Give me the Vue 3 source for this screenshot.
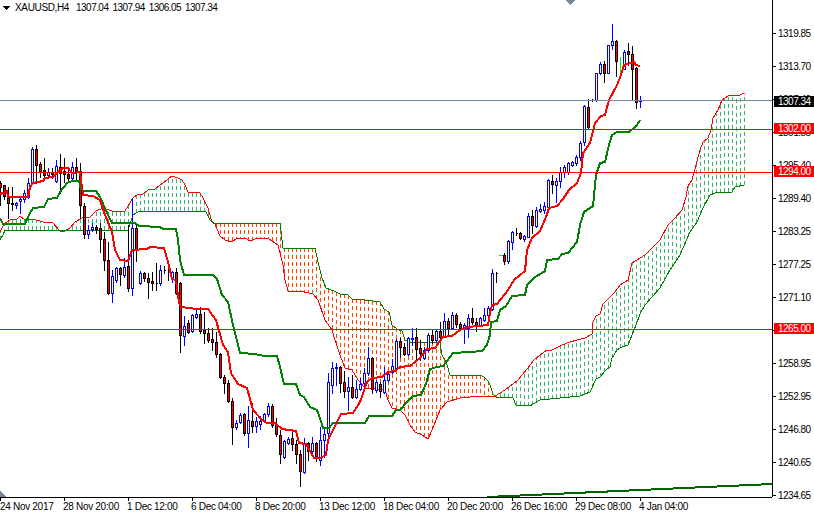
<script setup>
// candles: [high, low, bodyTop, bodyBottom, up] in chart pixels, one bar every 4px
const bars = [
  [181,205,183,187,0],[186,199,185,196,0],[187,218,198,203,0],[187,210,203,204,0],[202,208,203,205,1],[197,213,199,201,1],[190,202,193,199,1],[178,198,183,197,1],
  [147,183,149,182,1],[145,183,149,165,0],[162,177,164,172,0],[158,176,170,175,0],[168,177,172,175,1],[168,178,172,174,0],[160,182,166,181,1],[154,193,167,173,0],
  [158,182,171,174,0],[168,180,174,178,0],[162,179,167,178,1],[158,180,167,171,0],[163,218,171,205,0],[203,238,206,234,0],[225,238,230,234,1],[223,231,227,229,1],
  [225,233,227,229,0],[223,252,228,239,0],[232,270,239,260,0],[242,294,260,293,0],[270,302,276,293,1],[267,282,268,280,1],[267,285,268,274,0],[258,277,267,275,1],
  [225,291,266,288,0],[198,295,228,288,1],[225,261,228,250,0],[271,284,273,283,1],[272,281,273,278,0],[273,298,278,282,0],[272,290,281,283,0],[263,290,283,283,0],
  [265,285,270,283,1],[266,273,270,270,0],[267,280,271,271,0],[271,282,272,279,1],[268,294,272,293,0],[282,352,283,335,0],[316,345,326,336,1],[320,333,323,332,0],
  [314,332,315,331,1],[310,318,314,317,1],[307,333,314,331,0],[312,343,330,333,0],[328,342,333,340,0],[328,350,339,342,0],[332,357,342,354,0],[353,378,354,377,0],
  [375,393,377,383,0],[380,402,383,401,0],[398,444,401,427,0],[420,429,423,427,1],[413,423,415,422,1],[413,435,414,433,0],[406,447,420,433,1],[403,432,421,426,0],
  [417,432,421,426,1],[416,429,421,424,1],[413,421,414,420,1],[403,416,406,414,1],[404,427,406,425,0],[418,436,425,434,0],[430,463,435,454,0],[440,458,441,457,1],
  [437,444,439,443,1],[430,450,438,444,0],[440,463,444,454,0],[450,486,454,471,0],[438,473,444,472,1],[442,460,443,451,0],[437,452,443,451,1],[442,461,443,458,0],
  [427,465,440,460,1],[427,457,434,440,1],[373,438,382,433,1],[362,393,368,385,1],[363,385,367,368,1],[366,392,367,383,0],[371,397,382,391,0],[377,410,387,391,1],
  [375,398,387,397,0],[380,398,389,397,1],[378,390,384,389,1],[368,385,373,383,1],[347,375,358,373,1],[357,393,358,389,0],[380,392,382,390,1],[382,397,384,391,0],
  [367,393,380,392,1],[372,381,374,380,1],[359,373,366,372,1],[339,370,341,368,1],[338,357,341,347,0],[343,355,347,354,0],[337,355,338,354,1],[328,345,338,339,1],
  [328,360,337,349,0],[340,360,348,353,0],[347,359,350,358,1],[333,351,335,350,1],[330,343,335,340,0],[330,341,331,340,1],[322,341,331,337,0],[313,337,321,337,1],
  [318,334,321,328,0],[312,328,315,328,1],[313,327,315,324,0],[322,329,324,328,0],[323,343,325,328,1],[314,337,318,328,1],[308,324,318,322,0],[318,331,322,326,0],
  [317,326,318,325,1],[308,321,315,320,1],[306,316,308,315,1],[269,310,273,309,1],[272,282,273,273,0],[255,255,255,255,2],[253,264,255,261,0],[240,263,241,261,1],
  [231,249,232,242,1],[228,235,233,233,0],[232,239,233,238,0],[235,241,236,239,1],[213,237,216,237,1],[210,233,216,225,0],[207,227,210,226,1],[204,212,209,211,1],
  [202,213,206,210,1],[179,208,180,207,1],[175,193,181,184,0],[178,202,181,185,1],[167,187,172,181,1],[165,177,167,172,1],[162,174,163,172,1],[161,166,162,165,1],
  [155,165,157,163,1],[141,160,143,157,1],[105,145,106,142,1],[99,128,107,127,0],[99,101,100,100,0],[73,101,73,100,1],[62,74,64,73,1],[61,82,64,73,0],
  [45,73,45,73,1],[24,49,41,45,1],[40,76,41,61,0],[57,73,65,65,2],[50,69,52,69,1],[43,65,51,54,0],[46,100,54,69,0],[67,108,68,102,0],[96,107,100,101,1]
]

const spanA = [[0,232],[4,224],[10,220],[17,219],[20,216],[25,220],[33,219],[43,222],[52,222],[60,231],[63,232],[70,228],[75,222],[82,218],[90,217],[96,211],[103,208],[112,211],[125,211],[133,198],[137,195],[143,194],[148,190],[155,189],[163,183],[168,179],[172,176],[178,178],[182,180],[185,185],[188,192],[200,193],[203,198],[208,208],[212,222],[215,224],[220,236],[225,240],[232,242],[237,238],[245,238],[250,241],[258,238],[268,238],[272,241],[278,245],[283,265],[285,280],[288,291],[300,291],[313,294],[318,300],[325,320],[332,330],[335,340],[340,355],[345,368],[352,370],[358,380],[365,388],[385,390],[388,400],[392,408],[400,410],[405,415],[410,425],[415,432],[422,435],[428,439],[432,430],[440,410],[447,402],[460,398],[480,396],[495,396],[505,390],[518,380],[527,369],[534,360],[540,355],[547,350],[552,350],[562,345],[570,342],[577,340],[585,338],[592,334],[593,322],[596,316],[600,314],[603,304],[607,300],[615,292],[620,285],[628,280],[632,263],[640,258],[645,255],[655,245],[660,240],[668,225],[675,218],[682,210],[686,197],[688,186],[692,180],[696,165],[700,150],[703,142],[708,138],[711,130],[713,118],[718,110],[722,100],[725,98],[730,95],[740,95],[744,93]]
const spanB = [[0,240],[3,235],[5,230],[128,230],[133,215],[138,212],[148,211],[200,211],[206,212],[210,220],[215,224],[222,223],[280,223],[283,248],[315,248],[318,262],[322,278],[326,288],[334,291],[340,294],[347,294],[352,299],[365,300],[380,302],[384,309],[389,312],[392,325],[397,329],[402,331],[405,340],[409,342],[440,342],[442,355],[446,362],[448,368],[450,375],[480,375],[484,377],[488,381],[490,385],[493,394],[496,397],[513,398],[516,405],[530,406],[540,400],[560,398],[580,396],[590,392],[596,379],[600,377],[606,370],[610,367],[612,358],[617,350],[622,347],[628,345],[632,335],[636,325],[640,314],[645,305],[660,288],[670,270],[680,255],[690,232],[697,222],[703,208],[710,195],[715,193],[732,192],[735,187],[744,185]]

const tenkan = [[0,194],[3,193],[7,191],[8,197],[28,197],[30,187],[33,183],[43,181],[45,178],[53,177],[57,173],[63,168],[68,168],[72,173],[80,172],[83,195],[93,196],[100,200],[105,215],[112,232],[115,250],[120,260],[128,261],[132,250],[147,249],[150,247],[164,248],[168,262],[172,279],[176,280],[179,303],[181,307],[197,309],[208,309],[216,320],[223,345],[228,352],[231,373],[238,384],[247,388],[253,410],[262,420],[267,423],[275,423],[282,429],[296,431],[299,443],[306,444],[314,458],[320,458],[326,455],[328,440],[335,426],[341,414],[353,413],[360,402],[367,382],[372,378],[382,377],[388,372],[395,371],[400,367],[410,366],[420,358],[427,349],[435,348],[443,337],[452,336],[460,330],[468,327],[488,325],[490,313],[492,305],[497,304],[508,290],[514,280],[525,271],[527,250],[532,238],[540,231],[546,217],[549,208],[557,206],[563,199],[569,190],[577,183],[581,173],[583,153],[590,143],[595,123],[601,116],[605,115],[609,100],[617,85],[621,75],[624,65],[634,62],[636,65],[640,66]]
const kijun = [[0,218],[3,224],[25,224],[30,213],[33,208],[44,207],[48,199],[57,198],[60,192],[67,183],[72,181],[79,181],[81,190],[84,191],[96,191],[100,197],[108,215],[112,223],[135,223],[139,226],[160,227],[163,229],[176,229],[178,240],[180,260],[184,275],[213,275],[217,279],[222,295],[228,302],[233,325],[240,353],[255,354],[264,356],[277,356],[280,367],[284,384],[296,384],[300,395],[304,397],[310,407],[317,410],[320,418],[323,428],[329,428],[333,423],[365,423],[369,416],[392,416],[396,410],[400,410],[407,402],[413,396],[421,395],[426,384],[430,369],[437,367],[443,366],[447,361],[453,353],[470,352],[482,351],[487,345],[490,335],[491,322],[497,321],[500,310],[506,306],[512,296],[525,295],[527,285],[535,277],[542,273],[545,271],[547,260],[558,259],[562,254],[568,253],[577,242],[580,225],[584,212],[593,206],[596,175],[600,163],[605,162],[609,145],[612,135],[617,132],[629,132],[634,128],[637,125],[640,120]]

const toPath = (pts) => 'M' + pts.map((p) => p.join(' ')).join('L')

const yAt = (pts, x) => {
  for (let i = 1; i < pts.length; i++) {
    if (x <= pts[i][0]) {
      const [x0, y0] = pts[i - 1]
      const [x1, y1] = pts[i]
      return y0 + ((y1 - y0) * (x - x0)) / (x1 - x0 || 1)
    }
  }
  return pts[pts.length - 1][1]
}

// cloud hatching: one dotted column per bar, always drawn starting from span B
let hatchUp = ''
let hatchDown = ''
for (let x = 0; x <= 744; x += 4) {
  const a = Math.round(yAt(spanA, x))
  const b = Math.round(yAt(spanB, x))
  if (a < b) hatchUp += `M${x + 0.5} ${b}V${a}`
  else hatchDown += `M${x + 0.5} ${b}V${a}`
}

let upWicks = ''
let downWicks = ''
let upBodies = ''
let downBodies = ''
let limeWicks = ''
bars.forEach(([h, l, top, bot, kind], i) => {
  const x = i * 4
  const wick = `M${x + 0.5} ${h}V${l + 1}`
  const body = `M${x - 0.5} ${top + 0.5}h2V${bot + 0.5}h-2z`
  if (kind === 2) {
    limeWicks += h === l ? `M${x - 1} ${h + 0.5}h4` : wick
  } else if (kind === 1) {
    upWicks += wick
    upBodies += body
  } else {
    downWicks += wick
    downBodies += body
  }
})

const prices = ['1319.85', '1313.70', '1307.40', '1301.55', '1295.40', '1289.40', '1283.25', '1277.25', '1271.10', '1265.10', '1258.95', '1252.95', '1246.80', '1240.65', '1234.65']
const times = ['24 Nov 2017', '28 Nov 20:00', '1 Dec 12:00', '6 Dec 04:00', '8 Dec 20:00', '13 Dec 12:00', '18 Dec 04:00', '20 Dec 20:00', '26 Dec 16:00', '29 Dec 08:00', '4 Jan 04:00']
const levels = [
  { y: 129, text: '1302.00' },
  { y: 172, text: '1294.00' },
  { y: 329, text: '1265.00' }
]
const ohlc = ['1307.04', '1307.94', '1306.05', '1307.34']
</script>

<template>
  <div class="terminal">
    <div class="plot">
      <svg class="chart" width="772" height="497" viewBox="0 0 772 497">
        <path class="hatch up" :d="hatchUp" />
        <path class="hatch down" :d="hatchDown" />
        <path class="thin red" :d="toPath(spanA)" />
        <path class="thin green" :d="toPath(spanB)" />

        <path class="wick blue" :d="upWicks" />
        <path class="wick black" :d="downWicks" />
        <path class="wick lime" :d="limeWicks" />
        <path class="body up" :d="upBodies" />
        <path class="body down" :d="downBodies" />

        <path class="thick dark" d="M487 497L772 484" />
        <path class="thick green" :d="toPath(kijun)" />
        <path class="thick red" :d="toPath(tenkan)" />

        <path class="level bid" d="M0 100.5H772" />
        <path v-for="l in levels" :key="l.y" class="level" :d="`M0 ${l.y + 0.5}H772`" />

        <path class="marker" d="M565 0h10l-5 5z" />
        <path class="marker" d="M0 491l6 6H0z" />
        <path class="menu" d="M3 6h7l-3.5 4z" />
      </svg>
      <div class="title">
        <span class="symbol">XAUUSD,H4</span>
        <span v-for="v in ohlc" :key="v" class="quote">{{ v }}</span>
      </div>
    </div>

    <div class="price-axis">
      <div v-for="p in prices" :key="p" class="price-row">
        <i class="tick" />
        <span>{{ p }}</span>
      </div>
      <div class="tag bid-tag">1307.34</div>
      <div v-for="l in levels" :key="l.text" class="tag" :style="{ top: l.y - 6 + 'px' }">{{ l.text }}</div>
    </div>

    <div class="time-axis">
      <div v-for="t in times" :key="t" class="time-cell">
        <i class="time-tick" />
        <span>{{ t }}</span>
      </div>
    </div>
  </div>
</template>

<style scoped>
.terminal {
  display: grid;
  grid-template-columns: 772px 42px;
  grid-template-rows: 497px 17px;
  width: 814px;
  height: 514px;
  background: #fff;
  overflow: hidden;
  font-family: "Liberation Sans", Arial, sans-serif;
  font-size: 10px;
  color: #000;
}

.plot {
  position: relative;
}

.chart {
  display: block;
}

.title {
  position: absolute;
  top: 2px;
  left: 15px;
  display: flex;
  gap: 4px;
  line-height: 12px;
  letter-spacing: -0.35px;
}

.symbol {
  margin-right: 3px;
}

.quote {
  letter-spacing: -0.55px;
}

.chart path {
  fill: none;
  shape-rendering: crispEdges;
}

.hatch {
  stroke-width: 1;
  stroke-dasharray: 4 3;
}

.hatch.up { stroke: #3cb371; }
.hatch.down { stroke: #ff4500; }

.thin { stroke-width: 1; }
.thick { stroke-width: 2; stroke-linejoin: round; }

.red { stroke: #f00; }
.green { stroke: #008000; }
.dark { stroke: #006400; }

.wick { stroke-width: 1; }
.wick.blue { stroke: #00f; }
.wick.black { stroke: #000; }
.wick.lime { stroke: #0f0; }

.chart .body { stroke-width: 1; }
.chart .body.up { stroke: #00f; fill: #fff; }
.chart .body.down { stroke: #000; fill: #f00; }

.level { stroke: #f00; stroke-width: 1; }
.level.bid { stroke: #778899; }

.chart .marker { fill: #778899; }
.chart .menu { fill: #000; }

.price-axis {
  position: relative;
  display: flex;
  flex-direction: column;
  padding-top: 17px;
  border-left: 1px solid #000;
  letter-spacing: -0.5px;
}

.price-row {
  display: flex;
  align-items: center;
  gap: 2px;
  flex: 0 0 33px;
}

.tick {
  width: 3px;
  height: 1px;
  background: #000;
}

.tag {
  position: absolute;
  left: 1px;
  width: 41px;
  height: 11px;
  padding-left: 4px;
  box-sizing: border-box;
  line-height: 11px;
  background: #f00;
  color: #fff;
}

.tag.bid-tag {
  top: 96px;
  background: #000;
}

.time-axis {
  grid-column: 1;
  display: flex;
  border-top: 1px solid #000;
  letter-spacing: -0.3px;
}

.time-cell {
  position: relative;
  flex: 0 0 64px;
  padding-top: 3px;
  line-height: 12px;
  white-space: nowrap;
}

.time-cell + .time-cell span {
  margin-left: -1px;
}

.time-tick {
  position: absolute;
  top: 0;
  left: 0;
  width: 1px;
  height: 3px;
  background: #000;
}
</style>

<style>
html, body {
  background: #fff;
}
</style>
